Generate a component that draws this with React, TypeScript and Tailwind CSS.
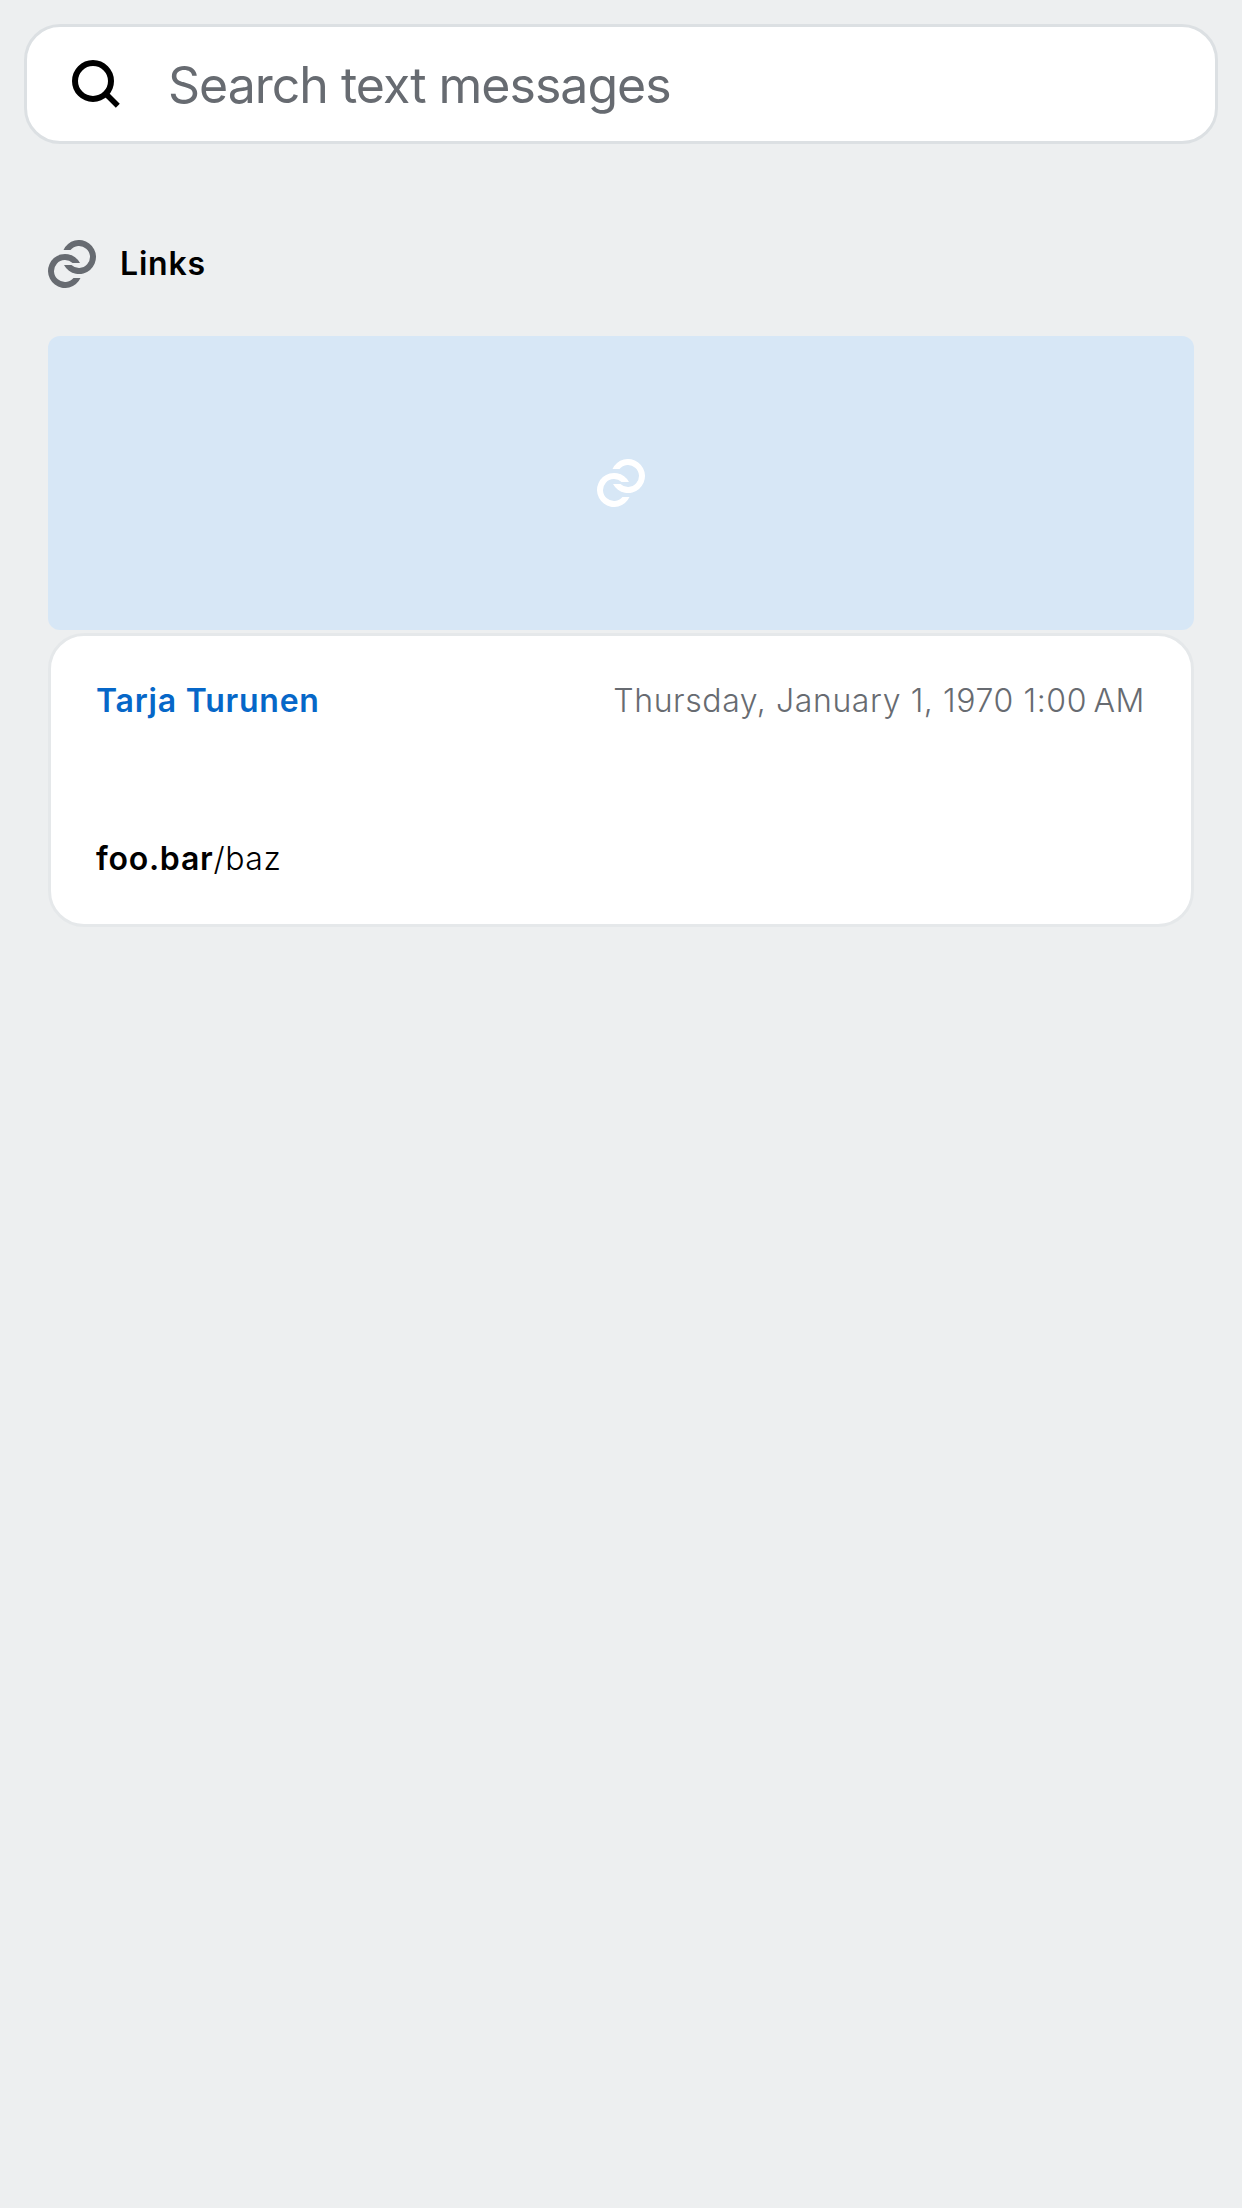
function LinkIcon({ className }: { className: string }) {
  return (
    <svg viewBox="0 0 48 48" className={className} fill="currentColor" aria-hidden="true">
      <path d="M15.5 10A17 17 0 1 1 16 25H23.45A11 11 0 1 0 22.5 10Z" />
      <path d="M32.5 38A17 17 0 1 1 32 23H24.55A11 11 0 1 0 25.5 38Z" />
    </svg>
  );
}

function SearchIcon() {
  return (
    <svg viewBox="0 0 48 48" className="size-12 shrink-0 text-black" fill="none" stroke="currentColor" strokeWidth="6" aria-hidden="true">
      <circle cx="21" cy="21" r="18" />
      <path d="M33.5 33.5L45.8 45.8" strokeWidth="5.6" />
    </svg>
  );
}

export default function App() {
  return (
    <main className="min-h-[2208px] w-full bg-[#edeff0] p-6 font-['Inter',sans-serif] text-black">
      <div className="flex h-[120px] items-center rounded-[36px] border-3 border-[#dce0e3] bg-white pl-[45px]">
        <SearchIcon />
        <span className="ml-12 pt-px text-[50px] leading-[60px] tracking-[-1px] whitespace-nowrap text-[#676b71]">Search text messages</span>
      </div>
      <section className="px-6 pt-24">
        <header className="flex h-12 items-center gap-6">
          <LinkIcon className="size-12 text-[#676b71]" />
          <h2 className="pb-px text-[32px] leading-10 font-semibold tracking-[0.8px]">Links</h2>
        </header>
        <div className="mt-12 flex h-[294px] items-center justify-center rounded-[12px] bg-[#d7e7f6]">
          <LinkIcon className="size-12 text-white" />
        </div>
        <article className="mt-[3px] flex h-[294px] flex-col justify-between rounded-[36px] border-3 border-[#e5e8ea] bg-white px-[45px] pt-[45px] pb-[45px] text-[32px] leading-10 tracking-[0.6px] whitespace-nowrap">
          <div className="flex justify-between">
            <span className="font-semibold tracking-[0.75px] text-[#0667c8]">Tarja Turunen</span>
            <time className="pr-px font-light text-[#676b71]">Thursday, January 1, 1970 1:00&#8239;AM</time>
          </div>
          <p className="font-light">
            <span className="font-semibold tracking-[0.75px]">foo.bar</span>/baz
          </p>
        </article>
      </section>
    </main>
  );
}
